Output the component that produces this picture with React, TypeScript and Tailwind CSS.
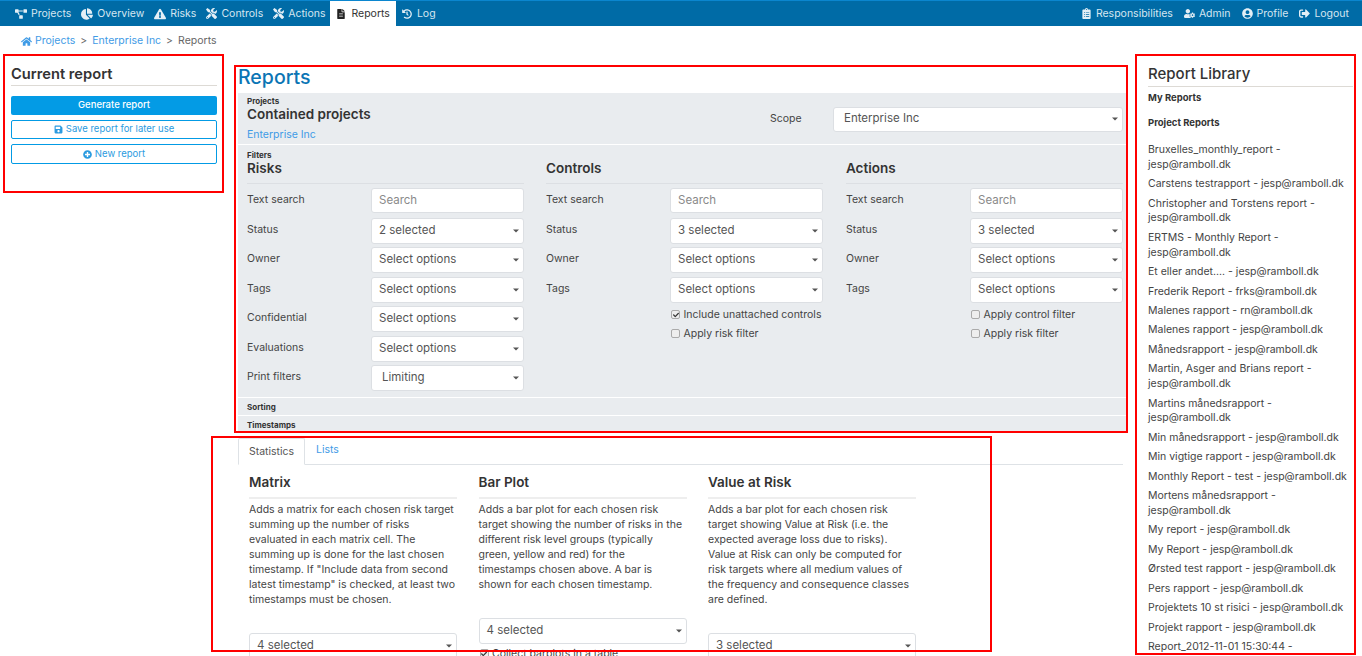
import React from "react";
import {
  FaProjectDiagram, FaChartPie, FaExclamationTriangle, FaTools, FaFileAlt, FaHistory,
  FaClipboardList, FaUserCog, FaUserCircle, FaSignOutAlt, FaHome, FaSave, FaPlusCircle, FaCheck,
} from "react-icons/fa";

const leftNav = [
  { label: "Projects", icon: FaProjectDiagram, size: 12 },
  { label: "Overview", icon: FaChartPie, size: 12 },
  { label: "Risks", icon: FaExclamationTriangle, size: 12 },
  { label: "Controls", icon: FaTools, size: 11 },
  { label: "Actions", icon: FaTools, size: 11 },
];

const rightNav = [
  { label: "Responsibilities", icon: FaClipboardList },
  { label: "Admin", icon: FaUserCog },
  { label: "Profile", icon: FaUserCircle },
  { label: "Logout", icon: FaSignOutAlt },
];

const library = [
  "Bruxelles_monthly_report - jesp@ramboll.dk",
  "Carstens testrapport - jesp@ramboll.dk",
  "Christopher and Torstens report - jesp@ramboll.dk",
  "ERTMS - Monthly Report - jesp@ramboll.dk",
  "Et eller andet.... - jesp@ramboll.dk",
  "Frederik Report - frks@ramboll.dk",
  "Malenes rapport - rn@ramboll.dk",
  "Malenes rapport - jesp@ramboll.dk",
  "Månedsrapport - jesp@ramboll.dk",
  "Martin, Asger and Brians report - jesp@ramboll.dk",
  "Martins månedsrapport - jesp@ramboll.dk",
  "Min månedsrapport - jesp@ramboll.dk",
  "Min vigtige rapport - jesp@ramboll.dk",
  "Monthly Report - test - jesp@ramboll.dk",
  "Mortens månedsrapport - jesp@ramboll.dk",
  "My report - jesp@ramboll.dk",
  "My Report - jesp@ramboll.dk",
  "Ørsted test rapport - jesp@ramboll.dk",
  "Pers rapport - jesp@ramboll.dk",
  "Projektets 10 st risici - jesp@ramboll.dk",
  "Projekt rapport - jesp@ramboll.dk",
  "Report_2012-11-01 15:30:44 -",
];

function Caret() {
  return (
    <span className="absolute right-[4px] top-1/2 -translate-y-1/2 border-x-[3px] border-t-[3px] border-x-transparent border-t-[#555]" />
  );
}

function Select({ value, className = "" }: { value: string; className?: string }) {
  return (
    <div className={`relative flex h-[26px] items-center rounded-[3px] border border-[#dcdfe3] bg-white text-[11.5px] text-[#555] ${className || "pl-[7px]"}`}>
      {value}
      <Caret />
    </div>
  );
}

function Field({ label, children }: { label: string; children: React.ReactNode }) {
  return (
    <div className="flex h-[29.5px] items-start">
      <div className="w-[124px] pt-[4px] text-[10.5px] text-[#444]">{label}</div>
      <div className="w-[153px]">{children}</div>
    </div>
  );
}

function Check({ label, checked }: { label: string; checked?: boolean }) {
  return (
    <div className="flex h-[19px] items-center gap-[3.5px] whitespace-nowrap text-[10.5px] text-[#444]">
      <span className="ml-px flex h-[9px] w-[9px] items-center justify-center rounded-[2px] border border-[#aaa] bg-[#eeeeee] text-[#333]">
        {checked && <FaCheck size={6} />}
      </span>
      {label}
    </div>
  );
}

function FilterColumn({ title, rows, className = "", children }: { title: string; rows: [string, string][]; className?: string; children?: React.ReactNode }) {
  return (
    <div className={`w-[277px] ${className}`}>
      <div className="text-[13.5px] font-semibold leading-[17px] text-[#333]">{title}</div>
      <div className="mt-[6px] mb-[4px] h-px bg-[#dcdfe3]" />
      <Field label="Text search">
        <div className="flex h-[25px] items-center rounded-[3px] border border-[#dcdfe3] bg-white pl-[7px] text-[11.5px] text-[#8a8a8a]">Search</div>
      </Field>
      {rows.map(([label, value]) => (
        <Field key={label} label={label}>
          <Select value={value} className={label === "Print filters" ? "pl-[10px]" : ""} />
        </Field>
      ))}
      {children}
    </div>
  );
}

function StatColumn({ title, text, selectGap, value, children }: { title: string; text: string; selectGap: number; value: string; children?: React.ReactNode }) {
  return (
    <div className="w-[208px] shrink-0">
      <div className="text-[13.5px] font-semibold leading-[18px] text-[#333]">{title}</div>
      <div className="mt-[6px] mb-[3px] h-[2px] bg-[#eeeeee]" />
      <p className="h-[114px] whitespace-pre text-[10.5px] leading-[15px] text-[#444]">{text}</p>
      <div style={{ height: selectGap }} />
      <Select value={value} />
      {children}
    </div>
  );
}

export default function App() {
  return (
    <div className="relative h-[656px] w-[1362px] overflow-hidden bg-white text-[#444] font-['Inter','Liberation_Sans',sans-serif]">
      {/* top bar */}
      <div className="flex h-[26px] items-stretch justify-between border-t border-[#0b86cf] bg-[#006ba6] pl-[10px] pr-[13px] text-[10.5px] text-[#d5e6f1]">
        <div className="flex items-stretch">
          {leftNav.map((item) => (
            <div key={item.label} className="flex items-center gap-[4px] px-[5px]">
              <item.icon size={item.size} className="text-[#e4eff6]" />
              {item.label}
            </div>
          ))}
          <div className="flex items-center gap-[5px] bg-white px-[6px] text-[#333]">
            <FaFileAlt size={10} className="text-[#222]" />
            Reports
          </div>
          <div className="flex items-center gap-[5px] px-[6px]">
            <FaHistory size={10} className="text-[#e4eff6]" />
            Log
          </div>
        </div>
        <div className="flex items-center gap-[11px]">
          {rightNav.map((item) => (
            <div key={item.label} className="flex items-center gap-[4px]">
              <item.icon size={11} className="text-[#e4eff6]" />
              {item.label}
            </div>
          ))}
        </div>
      </div>

      {/* breadcrumb */}
      <div className="flex h-[28px] items-center gap-[5px] pl-[21px] pt-[2px] text-[10.5px] text-[#3f9be6]">
        <span className="flex items-center gap-[3px]"><FaHome size={11} />Projects</span>
        <span className="text-[#666]">&gt;</span>
        <span>Enterprise Inc</span>
        <span className="text-[#666]">&gt;</span>
        <span className="text-[#666]">Reports</span>
      </div>

      <div className="flex items-start">
        {/* current report */}
        <div className="ml-[3px] mr-[10px] h-[139px] w-[221px] shrink-0 border-2 border-[#f00] pl-[6px] pr-[5px] pt-[9px]">
          <div className="text-[14.7px] font-semibold leading-[18px] text-[#333]">Current report</div>
          <div className="mt-[2px] mb-[10px] h-px bg-[#dddad5]" />
          <div className="flex h-[19px] items-center justify-center rounded-[2px] bg-[#039be5] text-[9.5px] font-medium text-white">Generate report</div>
          <div className="mt-[5px] flex h-[19px] items-center justify-center gap-[3px] rounded-[2px] border border-[#039be5] text-[9.5px] text-[#2b9be0]"><FaSave size={9} />Save report for later use</div>
          <div className="mt-[5px] flex h-[20px] items-center justify-center gap-[3px] rounded-[2px] border border-[#039be5] text-[9.5px] text-[#2b9be0]"><FaPlusCircle size={9} />New report</div>
        </div>

        {/* center column */}
        <div className="w-[894px] shrink-0">
          <div className="mt-[11px] h-[368px] w-[894px] overflow-hidden border-2 border-[#f00] pl-[2px]">
            <div className="h-[26px] text-[19.5px] font-medium leading-[21px] text-[#0b75b5]">Reports</div>
            <div className="h-[51px] bg-[#e9ecef] pl-[9px] pr-[3px] pt-[3px]">
              <div className="flex justify-between">
                <div>
                  <div className="text-[8px] font-bold leading-[10px] text-[#333]">Projects</div>
                  <div className="text-[13.5px] font-semibold leading-[17px] text-[#333]">Contained projects</div>
                  <div className="mt-[5px] text-[10.5px] leading-[14px] text-[#3f9be6]">Enterprise Inc</div>
                </div>
                <div className="mt-[10px] flex h-[26px] items-center">
                  <div className="w-[63px] text-[10.5px] text-[#444]">Scope</div>
                  <div className="relative flex h-[25px] w-[290px] items-center rounded-[3px] border border-[#dcdfe3] bg-white pl-[10px] text-[11.5px] text-[#555]">Enterprise Inc<Caret /></div>
                </div>
              </div>
            </div>
            <div className="mt-px h-[252px] bg-[#e9ecef] pl-[9px] pt-[6px]">
              <div className="text-[8px] font-bold leading-[9px] text-[#333]">Filters</div>
              <div className="flex gap-[22px]">
                <FilterColumn title="Risks" rows={[["Status", "2 selected"], ["Owner", "Select options"], ["Tags", "Select options"], ["Confidential", "Select options"], ["Evaluations", "Select options"], ["Print filters", "Limiting"]]} />
                <FilterColumn title="Controls" rows={[["Status", "3 selected"], ["Owner", "Select options"], ["Tags", "Select options"]]}>
                  <div className="ml-[124px] -mt-[1px]">
                    <Check label="Include unattached controls" checked />
                    <Check label="Apply risk filter" />
                  </div>
                </FilterColumn>
                <FilterColumn title="Actions" className="ml-px" rows={[["Status", "3 selected"], ["Owner", "Select options"], ["Tags", "Select options"]]}>
                  <div className="ml-[124px] -mt-[1px]">
                    <Check label="Apply control filter" />
                    <Check label="Apply risk filter" />
                  </div>
                </FilterColumn>
              </div>
            </div>
            <div className="mt-px flex h-[17px] items-center bg-[#e9ecef] pl-[9px] text-[8px] font-bold text-[#333]">Sorting</div>
            <div className="mt-px flex h-[17px] items-center bg-[#e9ecef] pl-[9px] text-[8px] font-bold text-[#333]">Timestamps</div>
          </div>

          {/* statistics tabs */}
          <div className="relative -ml-[23px] mt-[3px] h-[216px] w-[781px] pt-[2px]">
            <div className="relative ml-[27px] flex h-[27px] w-[885px] border-b border-[#dee2e6] text-[10.5px]">
              <div className="flex h-[27px] w-[67px] items-center justify-center rounded-t-[2px] border border-b-white border-[#dee2e6] bg-white text-[#555]">Statistics</div>
              <div className="ml-[11px] pt-[4px] text-[#3f9be6]">Lists</div>
            </div>
            <div className="ml-[38px] mt-[8px] flex gap-[21.5px]">
              <StatColumn title="Matrix" selectGap={17} value="4 selected" text={'Adds a matrix for each chosen risk target\nsumming up the number of risks\nevaluated in each matrix cell. The\nsumming up is done for the last chosen\ntimestamp. If "Include data from second\nlatest timestamp" is checked, at least two\ntimestamps must be chosen.'} />
              <StatColumn title="Bar Plot" selectGap={2} value="4 selected" text={"Adds a bar plot for each chosen risk\ntarget showing the number of risks in the\ndifferent risk level groups (typically\ngreen, yellow and red) for the\ntimestamps chosen above. A bar is\nshown for each chosen timestamp."}>
                <Check label="Collect barplots in a table" checked />
              </StatColumn>
              <StatColumn title="Value at Risk" selectGap={17} value="3 selected" text={"Adds a bar plot for each chosen risk\ntarget showing Value at Risk (i.e. the\nexpected average loss due to risks).\nValue at Risk can only be computed for\nrisk targets where all medium values of\nthe frequency and consequence classes\nare defined."} />
            </div>
            <div className="pointer-events-none absolute inset-0 border-2 border-[#f00]" />
          </div>
        </div>

        {/* report library */}
        <div className="ml-[7px] h-[601px] w-[221px] shrink-0 overflow-hidden border-2 border-[#f00] pl-[11px] pt-[9px]">
          <div className="text-[15px] font-medium leading-[18px] text-[#333]">Report Library</div>
          <div className="mt-[3px] h-px w-[205px] bg-[#dddad5]" />
          <div className="mt-[5px] text-[9.5px] font-bold leading-[12px] text-[#333]">My Reports</div>
          <div className="mt-[13px] text-[9.5px] font-bold leading-[12px] text-[#333]">Project Reports</div>
          <div className="mt-[14px] w-[200px]">
            {library.map((name, i) => (
              <div key={i} className="mb-[4.65px] text-[10.5px] leading-[14.8px] text-[#444]">{name}</div>
            ))}
          </div>
        </div>
      </div>
    </div>
  );
}
